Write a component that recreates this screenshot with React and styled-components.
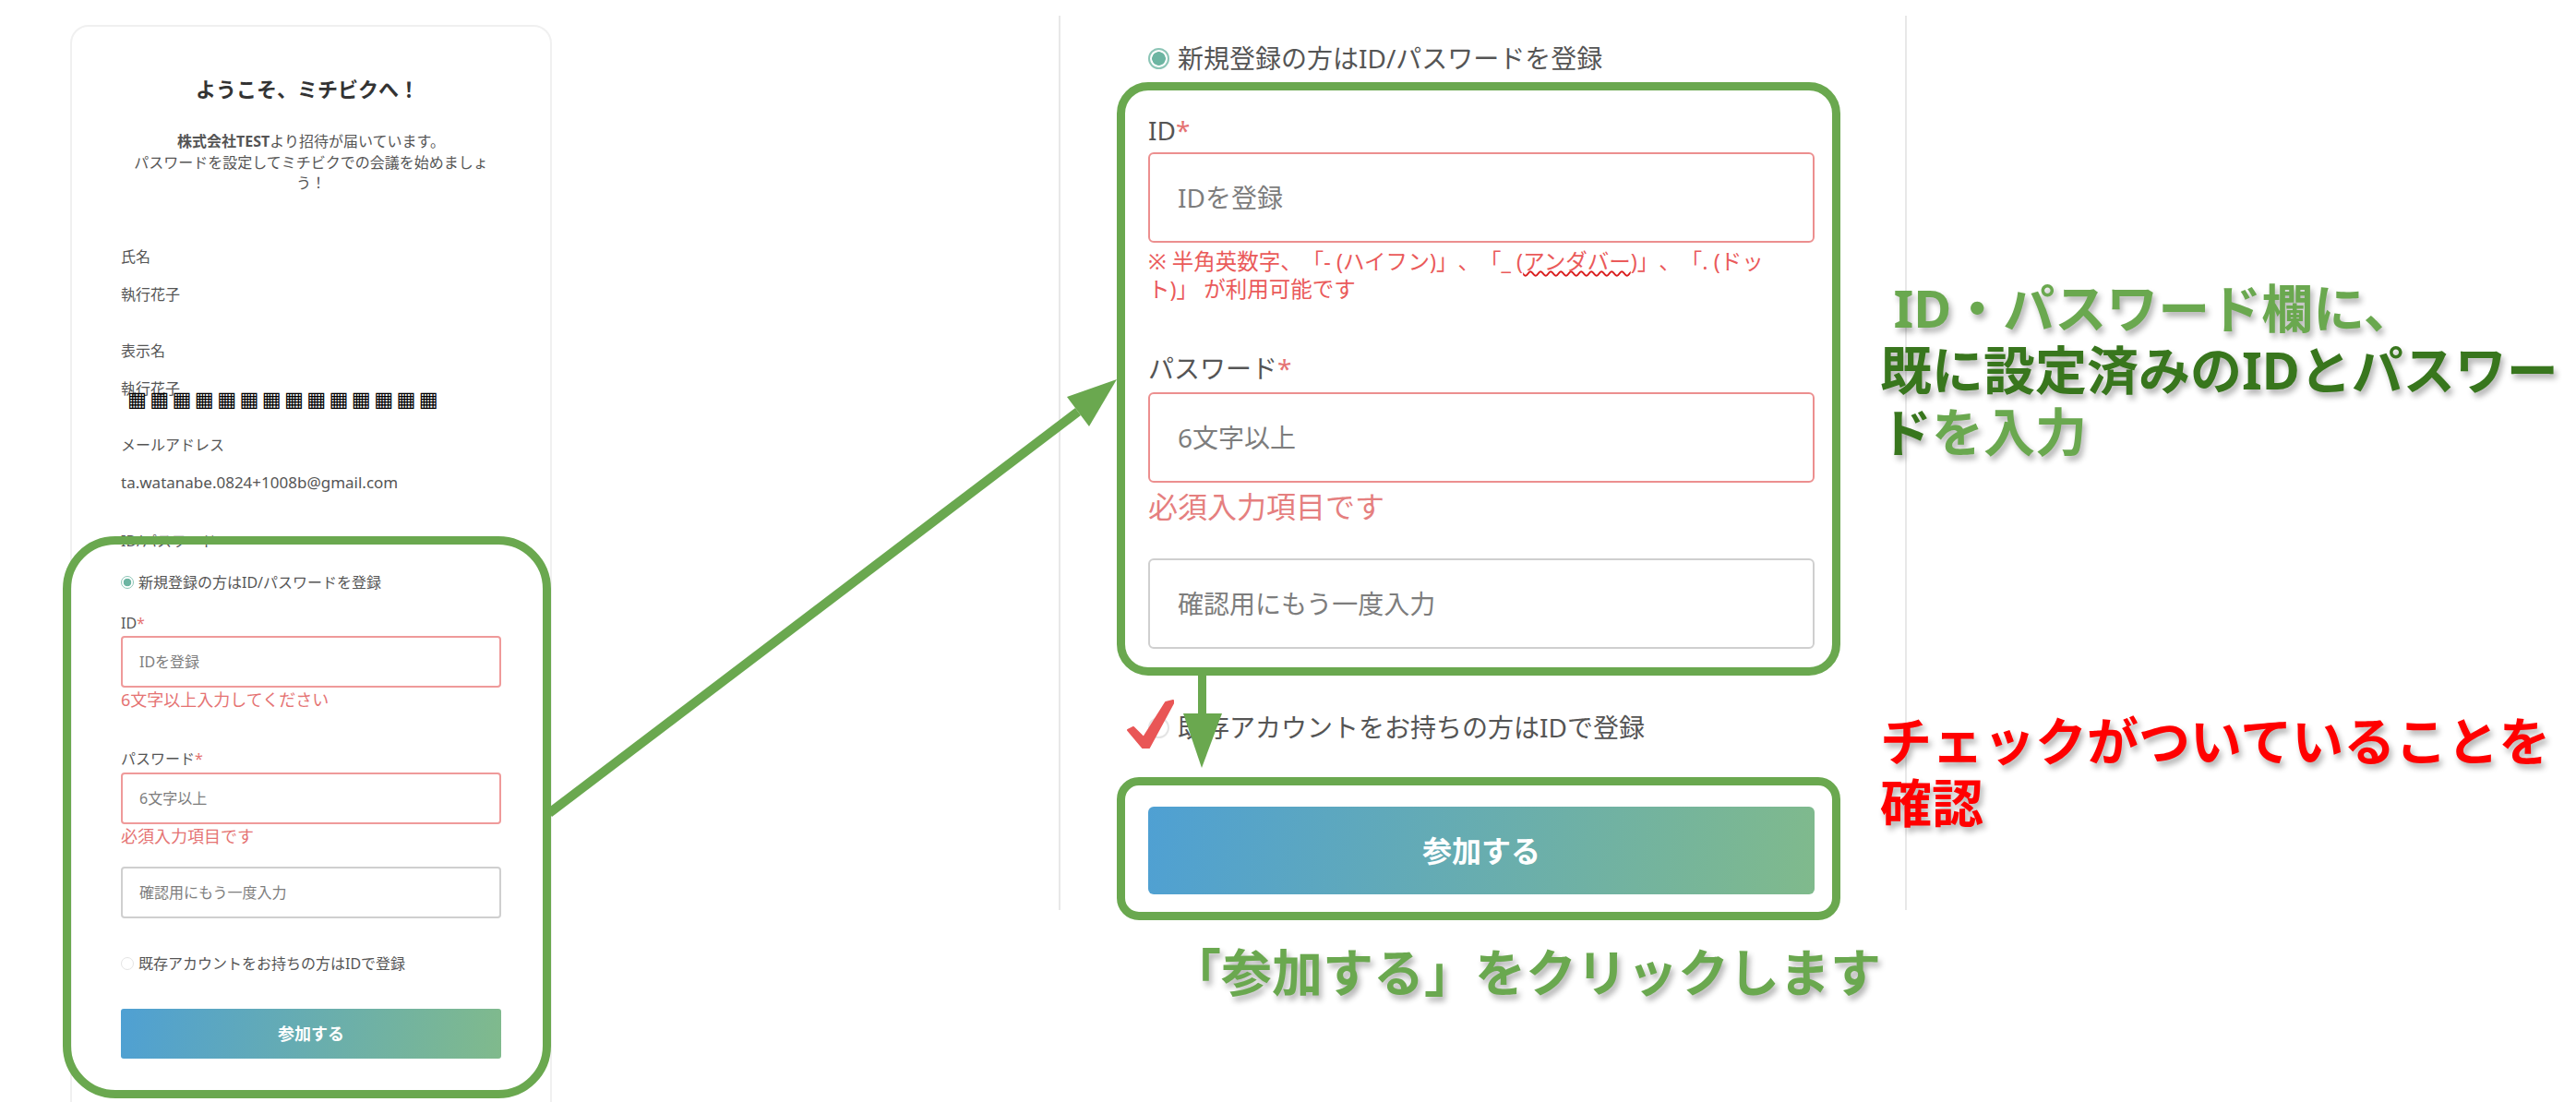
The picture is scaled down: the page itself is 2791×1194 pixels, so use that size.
import React from "react";
import styled, { createGlobalStyle } from "styled-components";

const GlobalStyle = createGlobalStyle`
  html, body {
    margin: 0;
    padding: 0;
    background: #fff;
  }
  * {
    box-sizing: border-box;
  }
`;

const FONT = `"Noto Sans", "Noto Sans CJK JP", sans-serif`;
const GREEN = "#6aa84f";

export default function App() {
  return (
    <Page>
      <GlobalStyle />

      <Card>
        <Title>ようこそ、ミチビクへ！</Title>
        <Intro>
          <strong>株式会社TEST</strong>より招待が届いています。
          <br />
          パスワードを設定してミチビクでの会議を始めましょ
          <br />
          う！
        </Intro>
        <InfoGroup $mt={57}>
          <InfoLabel>氏名</InfoLabel>
          <InfoValue>執行花子</InfoValue>
        </InfoGroup>
        <InfoGroup>
          <InfoLabel>表示名</InfoLabel>
          <InfoValue>
            執行花子
            <Garbled>▦▦▦▦▦▦▦▦▦▦▦▦▦▦</Garbled>
          </InfoValue>
        </InfoGroup>
        <InfoGroup>
          <InfoLabel>メールアドレス</InfoLabel>
          <EmailValue>ta.watanabe.0824+1008b@gmail.com</EmailValue>
        </InfoGroup>
        <SectionLabel>ID/パスワード</SectionLabel>

        <RadioRow $mt={23}>
          <Radio $checked />
          新規登録の方はID/パスワードを登録
        </RadioRow>
        <FieldLabel $mt={22}>
          ID<Required>*</Required>
        </FieldLabel>
        <TextBox $mt={3} $error>IDを登録</TextBox>
        <ErrorText>6文字以上入力してください</ErrorText>
        <FieldLabel $mt={40}>
          パスワード<Required>*</Required>
        </FieldLabel>
        <TextBox $mt={4} $error>6文字以上</TextBox>
        <ErrorText>必須入力項目です</ErrorText>
        <TextBox $mt={20}>確認用にもう一度入力</TextBox>
        <RadioRow $mt={38}>
          <Radio />
          既存アカウントをお持ちの方はIDで登録
        </RadioRow>
        <JoinButton $mt={38}>参加する</JoinButton>
      </Card>

      <CenterColumn>
        <ZoomPanel>
          <BigRadioRow $mt={0}>
            <BigRadio $checked />
            新規登録の方はID/パスワードを登録
          </BigRadioRow>
          <BigLabel $mt={42}>
            ID<Required>*</Required>
          </BigLabel>
          <BigTextBox $mt={6} $error>IDを登録</BigTextBox>
          <HintText>
            ※ 半角英数字、「- (ハイフン)」、「_ (<Squiggle>アンダバー</Squiggle>)」、「. (ドッ
            <br />
            ト)」 が利用可能です
          </HintText>
          <BigLabel $mt={53}>
            パスワード<Required>*</Required>
          </BigLabel>
          <BigTextBox $mt={8} $error>6文字以上</BigTextBox>
          <BigError>必須入力項目です</BigError>
          <BigTextBox $mt={34}>確認用にもう一度入力</BigTextBox>
          <BigRadioRow $mt={67}>
            <BigRadio />
            既存アカウントをお持ちの方はIDで登録
          </BigRadioRow>
          <BigJoinButton>参加する</BigJoinButton>
        </ZoomPanel>
        <ClickCaption>「参加する」をクリックします</ClickCaption>
      </CenterColumn>

      <Notes>
        <NoteBlock>
          {"\u00a0"}ID・パスワード欄に、
          <br />
          <Dark>既に設定済みのIDとパスワー</Dark>
          <br />
          <Dark>ド</Dark>を入力
        </NoteBlock>
        <NoteBlock $red $mt={268}>
          チェックがついていることを
          <br />
          確認
        </NoteBlock>
      </Notes>

      <Ring $x={68} $y={581} $w={529} $h={609} $r={57} />
      <Ring $x={1210} $y={89} $w={784} $h={643} $r={34} />
      <Ring $x={1210} $y={842} $w={784} $h={155} $r={24} />

      <Annotations viewBox="0 0 2791 1194">
        <line x1="595" y1="881" x2="1168" y2="446" stroke={GREEN} strokeWidth="10" />
        <polygon points="1210,411 1156,430 1180,462" fill={GREEN} />
        <rect x="1298" y="732" width="9" height="44" fill={GREEN} />
        <polygon points="1282,773 1324,773 1302,832" fill={GREEN} />
        <polygon
          points="1222,791 1228,788 1239,799 1263,761 1271,759 1271,762 1245,810 1238,810"
          fill="#e95656"
          stroke="#e95656"
          strokeWidth="2"
          strokeLinejoin="round"
        />
      </Annotations>
    </Page>
  );
}

const Page = styled.div`
  position: relative;
  display: flex;
  align-items: flex-start;
  width: 2791px;
  height: 1194px;
  overflow: hidden;
  background: #fff;
  font-family: ${FONT};
  color: #555;
  text-spacing-trim: space-all;
`;

/* left: the whole signup card */
const Card = styled.section`
  flex: none;
  width: 522px;
  height: 1300px;
  margin: 27px 0 0 76px;
  padding: 51px 53px 0 53px;
  background: #fff;
  border: 2px solid #f0f0f0;
  border-radius: 20px;
  font-size: 16px;
  line-height: 22px;
`;
const Title = styled.h1`
  margin: 0 8px 0 0;
  font-size: 22px;
  line-height: 32px;
  font-weight: 700;
  color: #333;
  text-align: center;
`;
const Intro = styled.p`
  margin: 30px 0 0 0;
  font-size: 16px;
  line-height: 22.5px;
  text-align: center;
  white-space: nowrap;
  strong {
    font-weight: 700;
  }
`;
const InfoGroup = styled.div`
  margin-top: ${(p) => p.$mt ?? 39}px;
`;
const InfoLabel = styled.div`
  height: 22px;
`;
const InfoValue = styled.div`
  position: relative;
  height: 22px;
  margin-top: 19px;
`;
const EmailValue = styled(InfoValue)`
  font-size: 17px;
`;
const Garbled = styled.span`
  position: absolute;
  left: 7px;
  top: 12px;
  font-family: "DejaVu Sans", sans-serif;
  font-size: 22px;
  line-height: 22px;
  letter-spacing: 3.5px;
  color: #000;
  white-space: nowrap;
`;
const SectionLabel = styled.div`
  margin-top: 41px;
`;
const RadioRow = styled.div`
  display: flex;
  align-items: center;
  gap: 5px;
  height: 22px;
  margin-top: ${(p) => p.$mt}px;
  white-space: nowrap;
`;
const Radio = styled.span`
  flex: none;
  width: 14px;
  height: 14px;
  border-radius: 50%;
  border: 1px solid ${(p) => (p.$checked ? "#8cc5b6" : "#e4e4e4")};
  background: ${(p) =>
    p.$checked ? "radial-gradient(circle, #6db5a2 0 4px, #fff 4.6px)" : "#fff"};
`;
const FieldLabel = styled.div`
  height: 22px;
  margin-top: ${(p) => p.$mt}px;
`;
const Required = styled.span`
  color: #e57373;
`;
const TextBox = styled.div`
  display: flex;
  align-items: center;
  height: 56px;
  margin-top: ${(p) => p.$mt}px;
  padding-left: 18px;
  border: 2px solid ${(p) => (p.$error ? "#ef9a9a" : "#cfcfcf")};
  border-radius: 4px;
  color: #7d7d7d;
  font-size: 16px;
`;
const ErrorText = styled.div`
  height: 26px;
  font-size: 18px;
  line-height: 26px;
  color: #e57373;
  white-space: nowrap;
`;
const JoinButton = styled.div`
  display: flex;
  align-items: center;
  justify-content: center;
  height: 54px;
  margin-top: ${(p) => p.$mt}px;
  border-radius: 3px;
  background: linear-gradient(100deg, #4fa0d3 0%, #80ba8c 100%);
  color: #fff;
  font-size: 18px;
  font-weight: 700;
`;

/* middle: the enlarged part of the form */
const CenterColumn = styled.div`
  flex: none;
  margin: 17px 0 0 549px;
  width: 919px;
`;
const ZoomPanel = styled.section`
  height: 969px;
  padding: 28px 98px 0 95px;
  border-left: 2px solid #e8e8e8;
  border-right: 2px solid #e8e8e8;
  font-size: 28px;
  line-height: 36px;
`;
const BigRadioRow = styled.div`
  display: flex;
  align-items: center;
  gap: 9px;
  height: 36px;
  margin-top: ${(p) => p.$mt}px;
  white-space: nowrap;
`;
const BigRadio = styled(Radio)`
  width: 23px;
  height: 23px;
  border-width: 2px;
  background: ${(p) =>
    p.$checked ? "radial-gradient(circle, #6db5a2 0 7px, #fff 7.6px)" : "#fff"};
`;
const BigLabel = styled.div`
  height: 36px;
  margin-top: ${(p) => p.$mt}px;
`;
const BigTextBox = styled.div`
  display: flex;
  align-items: center;
  height: 98px;
  margin-top: ${(p) => p.$mt}px;
  padding-left: 30px;
  border: 2px solid ${(p) => (p.$error ? "#ec8f8f" : "#cfcfcf")};
  border-radius: 6px;
  color: #7d7d7d;
  font-size: 28px;
`;
const HintText = styled.div`
  margin-top: 5px;
  font-size: 23.5px;
  line-height: 30px;
  color: #ea5a5a;
  white-space: nowrap;
`;
const Squiggle = styled.span`
  text-decoration: underline wavy #d91c1c 2px;
`;
const BigError = styled.div`
  height: 44px;
  margin-top: 4px;
  font-size: 32px;
  line-height: 44px;
  color: #e57f7f;
`;
const BigJoinButton = styled.div`
  display: flex;
  align-items: center;
  justify-content: center;
  height: 95px;
  margin-top: 68px;
  border-radius: 6px;
  background: linear-gradient(100deg, #4fa0d3 0%, #80ba8c 100%);
  color: #fff;
  font-size: 32px;
  font-weight: 700;
`;
const ClickCaption = styled.div`
  margin: 32px 0 0 121px;
  font-size: 55px;
  line-height: 70px;
  font-weight: 700;
  color: ${GREEN};
  text-shadow: 3px 5px 6px rgba(0, 0, 0, 0.3);
  white-space: nowrap;
`;

/* right: the explanations, they run slightly over the panel's edge */
const Notes = styled.div`
  flex: none;
  position: relative;
  margin: 300px 0 0 -29px;
`;
const NoteBlock = styled.p`
  margin: ${(p) => p.$mt ?? 0}px 0 0 0;
  font-size: 56px;
  line-height: 67px;
  font-weight: 700;
  white-space: nowrap;
  color: ${(p) => (p.$red ? "#ff0000" : GREEN)};
  text-shadow: 3px 5px 6px rgba(0, 0, 0, 0.3);
`;
const Dark = styled.span`
  color: #38761d;
`;

/* markup drawn on top of the screenshots */
const Ring = styled.div`
  position: absolute;
  left: ${(p) => p.$x}px;
  top: ${(p) => p.$y}px;
  width: ${(p) => p.$w}px;
  height: ${(p) => p.$h}px;
  border: 9px solid ${GREEN};
  border-radius: ${(p) => p.$r}px;
`;
const Annotations = styled.svg`
  position: absolute;
  left: 0;
  top: 0;
  width: 2791px;
  height: 1194px;
  pointer-events: none;
`;
